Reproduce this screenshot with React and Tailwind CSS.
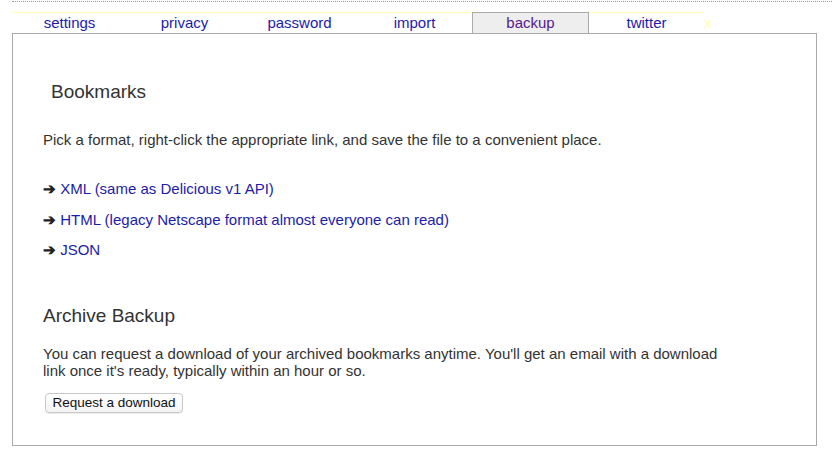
export default function App() {
  const tabs = ["settings", "privacy", "password", "import", "backup", "twitter"];
  return (
    <div className="w-[832px] h-[453px] bg-white font-['Liberation_Sans',Arial,sans-serif] text-[#333]">
      <div className="ml-[12px] mt-[1px] border-t border-dotted border-[#999] pt-[10px]">
        {/* tabs */}
        <div className="flex items-start">
          {tabs.map((t) =>
            t === "backup" ? (
              <div
                key={t}
                className="w-[117px] h-[21px] border border-b-0 border-[#aaa] bg-[#eee] text-center text-[15px] leading-[19px] text-[#551a8b]"
              >
                {t}
              </div>
            ) : (
              <div
                key={t}
                className="w-[115px] h-[21px] border-t border-[#ffffb0] text-center text-[15px] leading-[19px] text-[#1c1ca8]"
              >
                {t}
              </div>
            )
          )}
          <div className="text-[15px] leading-[19px] pt-[1px] text-[#ffffb0]">x</div>
        </div>

        {/* panel */}
        <div className="w-[805px] h-[413px] border border-[#aaa] pl-[30px]">
          <h3 className="mt-[47px] ml-[8px] text-[19px] leading-[22px]">Bookmarks</h3>
          <p className="mt-[28px] text-[15px] leading-[18px]">
            Pick a format, right-click the appropriate link, and save the file to a convenient place.
          </p>
          <div className="mt-[31px] flex flex-col gap-[12.5px] text-[15px] leading-[18px]">
            <div>
              <span className="font-bold text-[#222]">➔</span>{" "}
              <a className="text-[#1c1ca8]">XML (same as Delicious v1 API)</a>
            </div>
            <div>
              <span className="font-bold text-[#222]">➔</span>{" "}
              <a className="text-[#1c1ca8]">HTML (legacy Netscape format almost everyone can read)</a>
            </div>
            <div>
              <span className="font-bold text-[#222]">➔</span> <a className="text-[#1c1ca8]">JSON</a>
            </div>
          </div>
          <h3 className="mt-[46px] text-[19px] leading-[22px]">Archive Backup</h3>
          <p className="mt-[18px] w-[700px] text-[15px] leading-[17px]">
            You can request a download of your archived bookmarks anytime. You'll get an email with a download
            link once it's ready, typically within an hour or so.
          </p>
          <button className="mt-[14px] ml-[2px] h-[20px] w-[138px] rounded-[4px] border border-[#c8c8c8] bg-gradient-to-b from-white to-[#f4f4f4] text-[13.5px] leading-[18px] text-[#111] shadow-[0_1px_1px_rgba(0,0,0,0.08)]">
            Request a download
          </button>
        </div>
      </div>
    </div>
  );
}
